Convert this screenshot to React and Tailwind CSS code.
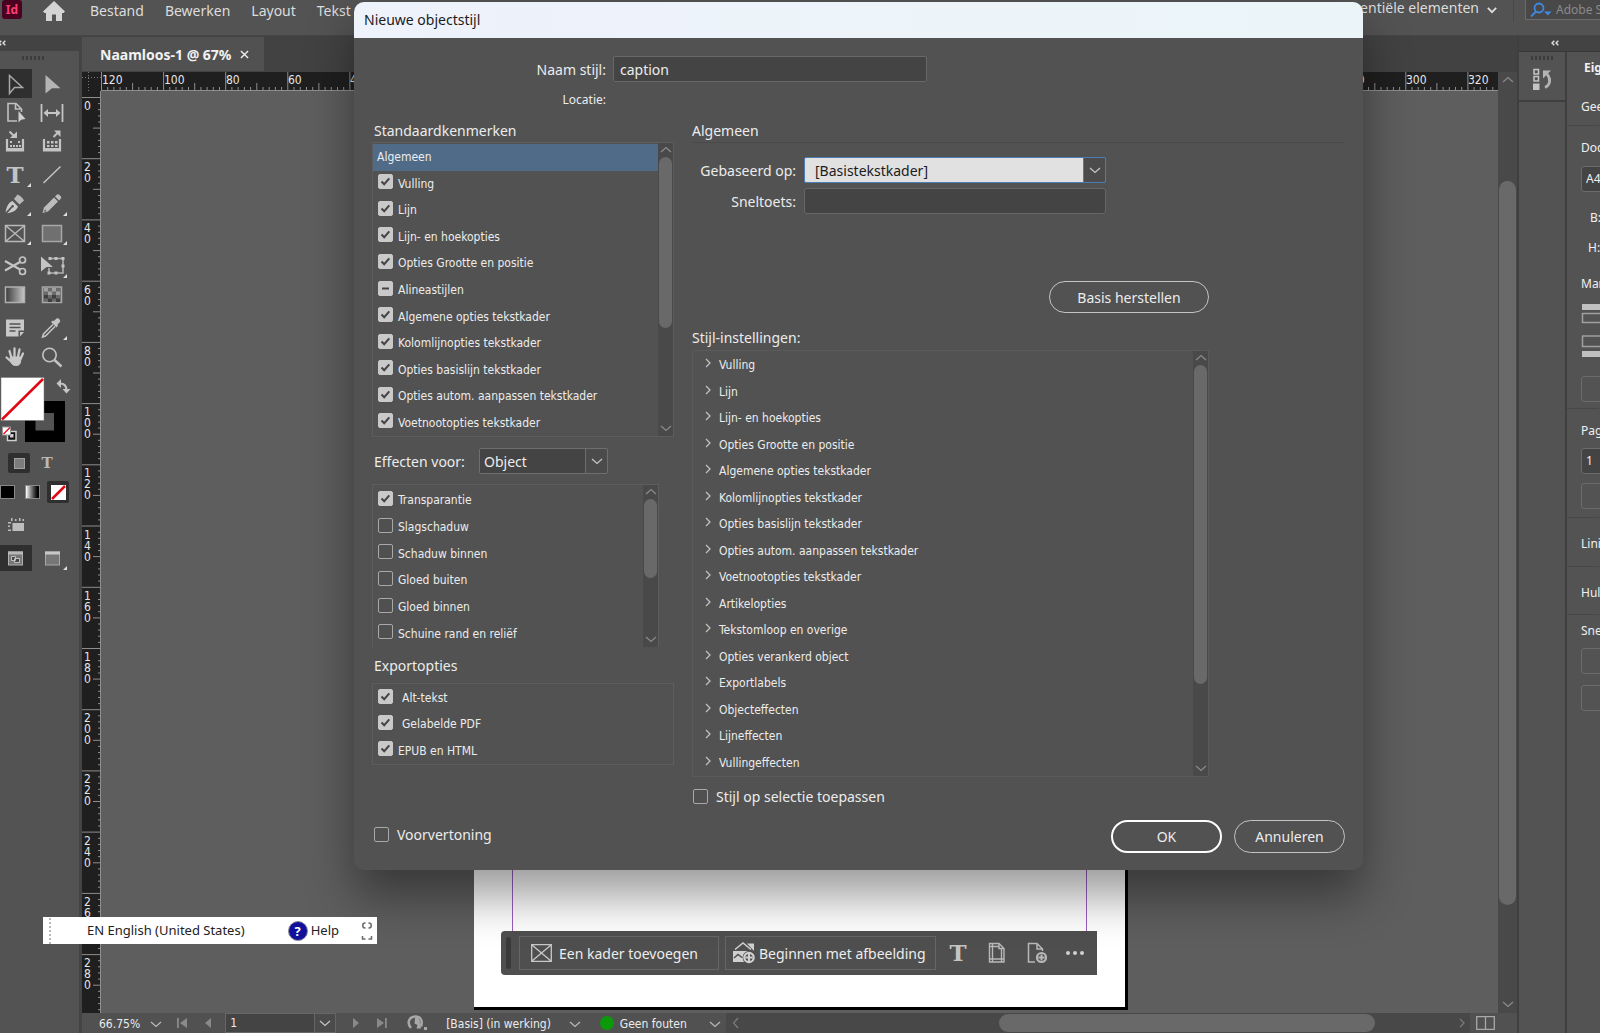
import React, { useState } from 'react';

const standardAttributes = [
  { label: 'Algemeen', state: 'none' },
  { label: 'Vulling', state: 'on' },
  { label: 'Lijn', state: 'on' },
  { label: 'Lijn- en hoekopties', state: 'on' },
  { label: 'Opties Grootte en positie', state: 'on' },
  { label: 'Alineastijlen', state: 'mixed' },
  { label: 'Algemene opties tekstkader', state: 'on' },
  { label: 'Kolomlijnopties tekstkader', state: 'on' },
  { label: 'Opties basislijn tekstkader', state: 'on' },
  { label: 'Opties autom. aanpassen tekstkader', state: 'on' },
  { label: 'Voetnootopties tekstkader', state: 'on' },
];

const effects = [
  { label: 'Transparantie', state: 'on' },
  { label: 'Slagschaduw', state: 'off' },
  { label: 'Schaduw binnen', state: 'off' },
  { label: 'Gloed buiten', state: 'off' },
  { label: 'Gloed binnen', state: 'off' },
  { label: 'Schuine rand en reliëf', state: 'off' },
];

const exportOptions = [
  { label: 'Alt-tekst', state: 'on', indent: true },
  { label: 'Gelabelde PDF', state: 'on', indent: true },
  { label: 'EPUB en HTML', state: 'on' },
];

const styleSettings = [
  'Vulling',
  'Lijn',
  'Lijn- en hoekopties',
  'Opties Grootte en positie',
  'Algemene opties tekstkader',
  'Kolomlijnopties tekstkader',
  'Opties basislijn tekstkader',
  'Opties autom. aanpassen tekstkader',
  'Voetnootopties tekstkader',
  'Artikelopties',
  'Tekstomloop en overige',
  'Opties verankerd object',
  'Exportlabels',
  'Objecteffecten',
  'Lijneffecten',
  'Vullingeffecten',
];

const chevronPaths = {
  up: 'M1 8 6 3.5 11 8',
  down: 'M1 4 6 8.5 11 4',
  left: 'M8 1 3.5 6 8 11',
  right: 'M4 2 8 6 4 10',
};

const Chevron = ({ dir = 'down', className = '' }) => (
  <svg viewBox="0 0 12 12" className={`w-3 h-3 shrink-0 ${className}`} fill="none" stroke="currentColor" strokeWidth="1.3">
    <path d={chevronPaths[dir]} />
  </svg>
);

const CollapseIcon = ({ className = '' }) => (
  <svg viewBox="0 0 8 6" className={`w-2 h-[6px] ${className}`} fill="none" stroke="#e0e0e0" strokeWidth="1.4">
    <path d="M3.3.7 1 3l2.3 2.300M7.300.700 5 3l2.300 2.300" />
  </svg>
);

const Checkbox = ({ id, state, className = '' }) => {
  const [value, setValue] = useState(state);
  const filled = value !== 'off';
  return (
    <span className={`relative block w-[15px] h-[15px] shrink-0 ${className}`}>
      <input
        id={id}
        type="checkbox"
        checked={filled}
        onChange={() => setValue(filled ? 'off' : 'on')}
        className={`block appearance-none w-[15px] h-[15px] rounded-[2px] border ${filled ? 'bg-[#c9c9c9] border-[#c9c9c9]' : 'bg-[#505050] border-[#a8a8a8]'}`}
      />
      {filled && (
        <svg viewBox="0 0 15 15" className="absolute inset-0 w-[15px] h-[15px] pointer-events-none" fill="none" stroke="#444444" strokeWidth="2">
          <path d={value === 'mixed' ? 'M4 7.5h7' : 'M3.5 7.5 6.2 10.2 11.3 4.3'} />
        </svg>
      )}
    </span>
  );
};

const CheckRow = ({ prefix, item }) => {
  const id = `${prefix}-${item.label}`;
  if (item.state === 'none') {
    return <div className="flex-1 flex items-center pl-1 bg-[#4f6b88]">{item.label}</div>;
  }
  return (
    <div className="flex-1 flex items-center pl-[5px]">
      <Checkbox id={id} state={item.state} className="mb-1" />
      <label htmlFor={id} className={item.indent ? 'pl-[9px]' : 'pl-[5px]'}>{item.label}</label>
    </div>
  );
};

const ListScrollbar = ({ thumb }) => (
  <div className="w-[15px] shrink-0 bg-[#494949] text-[#8a8a8a] flex flex-col items-center">
    <div className="h-[14px] flex items-center"><Chevron dir="up" /></div>
    <div className={`w-[13px] rounded-full bg-[#696969] ${thumb}`} />
    <div className="flex-1" />
    <div className="h-4 flex items-center"><Chevron /></div>
  </div>
);

/* ---------- toolbox ---------- */

const TextGlyph = ({ x = 15, y = 22, size = 23 }) => (
  <text x={x} y={y} fontSize={size} textAnchor="middle" fontWeight="700" fontFamily="DejaVu Serif, serif" fill="#c4c4c4">T</text>
);

const tools = {
  select: <path d="M9.5 5.5 22.5 17.5H14.5L9.5 23.5Z" fill="none" stroke="#a8a8a8" strokeWidth="1.5" />,
  direct: <path d="M9.5 5 24.5 18.2H16L9.5 23.5Z" fill="#b4b4b4" />,
  page: (
    <>
      <path d="M17 22H8V4.5h8l5.5 5.5v3M15.5 4.5V10h6" fill="none" stroke="#c0c0c0" strokeWidth="1.6" />
      <path d="M18.5 12v11.5l2.6-2.8 4.4-.6Z" fill="#d0d0d0" />
    </>
  ),
  gap: (
    <>
      <path d="M5.5 5v18M26.5 5v18M9 14h14" stroke="#c4c4c4" strokeWidth="1.8" />
      <path d="M12 10 7.5 14l4.5 4ZM20 10l4.5 4-4.5 4Z" fill="#c4c4c4" />
    </>
  ),
  collect: (
    <>
      <path d="M7 11v11.5h16V11" fill="none" stroke="#c4c4c4" strokeWidth="2.2" />
      <path d="M8 20h14v2H8ZM10 13h2v2h-2ZM18 13h2v2h-2ZM10 17h2v2h-2ZM13 17h2v2h-2ZM16 17h2v2h-2ZM19 17h2v2h-2Z" fill="#c4c4c4" />
      <path d="m9.500 3.500 4.500 4.500" stroke="#c4c4c4" strokeWidth="2" />
      <path d="M17 3.500V10H10Z" fill="#c4c4c4" />
    </>
  ),
  place: (
    <>
      <path d="M8 11v11.5h16V11" fill="none" stroke="#c4c4c4" strokeWidth="2.2" />
      <path d="M9 20h14v2H9ZM11 13h2.500v2.500H11ZM15 13h2.500v2.500H15ZM19 13h2.500v2.500H19ZM11 17h2.500v2H11ZM15 17h2.500v2H15ZM19 17h2.500v2H19Z" fill="#c4c4c4" />
      <path d="m17.500 9 4-4" stroke="#c4c4c4" strokeWidth="2" />
      <path d="M18 2.500h6.500V9Z" fill="#c4c4c4" />
    </>
  ),
  type: <TextGlyph />,
  line: <path d="M7.5 22 24.5 5.500" stroke="#c4c4c4" strokeWidth="1.5" />,
  pen: (
    <>
      <path d="M5.500 22.500c1-5.500 2.500-9.500 7-11.500l5.500 5.500c-1.500 4.500-6 6-11 7l5.500-6a1.300 1.300 0 1 0-1.200-1.200Z" fill="#cacaca" />
      <path d="m14 9 3.500-4.500c2.500 1 5.500 3.500 6.500 6l-4.500 4Z" fill="#b8b8b8" />
    </>
  ),
  pencil: (
    <>
      <path d="M6.500 23 8 17.500 18 7.500l4 4L12 21.500Z" fill="#bdbdbd" />
      <path d="m19 6.500 1.500-1.500c1-1 2-1 3 0l1 1c1 1 1 2 0 3L23 10.500Z" fill="#bdbdbd" />
      <path d="m9 19.500 1.500 1.500-2.500 1Z" fill="#535353" />
    </>
  ),
  frame: <path d="M5.5 6.5h19v16h-19ZM5.5 6.5l19 16M24.5 6.5l-19 16" fill="none" stroke="#b8b8b8" strokeWidth="1.5" />,
  rect: <rect x="6.5" y="6.5" width="19" height="16" fill="#707070" stroke="#a6a6a6" strokeWidth="1.5" />,
  scissors: (
    <g fill="none" stroke="#c4c4c4">
      <circle cx="22.500" cy="8" r="3" strokeWidth="1.7" />
      <circle cx="22.500" cy="19.500" r="3" strokeWidth="1.7" />
      <path d="M20 10 5 18.500M20 17.500 5 9" strokeWidth="2.2" />
    </g>
  ),
  transform: (
    <>
      <path d="M14 6.500h13v14.500H13V16" fill="none" stroke="#b0b0b0" strokeWidth="1.6" />
      <path d="M5 4.500 17 15h-6.500L5 19.500Z" fill="#c4c4c4" />
      <path d="M25.500 5h3v3h-3ZM25.500 12.500h3v3h-3ZM18.500 19.500h3v3h-3ZM11.500 19.500h3v3h-3ZM18.500 5h3v3h-3ZM12.500 5h3v3h-3Z" fill="#c4c4c4" />
    </>
  ),
  gradient: <rect x="5.5" y="6" width="19" height="15.5" fill="url(#toolGradient)" stroke="#b0b0b0" strokeWidth="1.5" />,
  feather: (
    <>
      <rect x="6.5" y="6" width="19" height="15.5" fill="#6a6a6a" stroke="#a6a6a6" strokeWidth="1.5" />
      <path d="M8 7h4v3.500H8ZM16 7h4v3.500h-4ZM12 10.500h4v3.500h-4ZM20 10.500h4v3.500h-4Z" fill="#a0a0a0" />
      <path d="M8 14h4v3.500H8ZM16 14h4v3.500h-4ZM12 17.500h4V21h-4ZM20 17.500h4V21h-4Z" fill="#404040" />
    </>
  ),
  note: (
    <>
      <path d="M6 5.500h18v11h-5.500v6H6ZM20 18h4L20 22.500Z" fill="#c8c8c8" />
      <path d="M9.500 10h11M9.500 13.500h11M9.500 17h6" stroke="#535353" strokeWidth="1.3" />
    </>
  ),
  eyedropper: (
    <>
      <path d="M17 10.500 7.500 20l-1 3 3-1L19 12.500" fill="none" stroke="#c4c4c4" strokeWidth="1.5" />
      <path d="m15 8 2-1.500 1 .5 2.500-2.500c1.500-1 4.500 1.500 3.500 3.500L21.500 10.500l.5 1L20.500 13.500Z" fill="#c4c4c4" />
    </>
  ),
  hand: (
    <g stroke="#c8c8c8" strokeLinecap="round" fill="#c8c8c8">
      <path d="M11.500 15 9.500 8M14.500 14V5.500M18 14 19.500 6.500M20.500 16 23 10.500M10.500 18 6.500 14.500" strokeWidth="2.3" />
      <path d="M10.500 14H21l-.5 5.500c-1 2.500-2 3-5 3s-4-2-5-4Z" strokeWidth="1" />
    </g>
  ),
  zoom: (
    <g fill="none" stroke="#c4c4c4">
      <circle cx="13.500" cy="12" r="6.700" strokeWidth="1.6" />
      <path d="m18.500 17 7 6.500" strokeWidth="2.4" />
    </g>
  ),
};

const toolGroups = [
  [['select', 'direct'], ['page', 'gap'], ['collect', 'place']],
  [['type', 'line'], ['pen', 'pencil'], ['frame', 'rect']],
  [['scissors', 'transform'], ['gradient', 'feather']],
  [['note', 'eyedropper'], ['hand', 'zoom']],
];

const withFlyout = ['type', 'pen', 'pencil', 'frame', 'rect', 'transform', 'eyedropper'];

const Tool = ({ name, active }) => (
  <button aria-label={name} className={`w-8 h-[29px] shrink-0 ${active ? 'bg-[#2f2f2f]' : ''}`}>
    <svg viewBox="0 0 32 28" className="w-8 h-7">
      {tools[name]}
      {withFlyout.includes(name) && <path d="M31 22v4h-4Z" fill="#e0e0e0" />}
    </svg>
  </button>
);

const Toolbox = () => (
  <aside className="w-[82px] shrink-0 border-r-[3px] border-[#444444] bg-[#535353]">
    <div className="h-[15px] bg-[#434343] pt-1"><CollapseIcon className="-ml-[2px]" /></div>
    <div className="h-[18px] flex gap-[2px] pl-[22px] pt-[5px]">
      {[0, 1, 2, 3, 4, 5].map((i) => <span key={i} className="w-[2px] h-1 bg-[#3c3c3c]" />)}
    </div>
    <div className="flex flex-col gap-1">
      {toolGroups.map((group, g) => (
        <div key={g}>
          {group.map(([left, right]) => (
            <div key={left} className="flex gap-1">
              <Tool name={left} active={left === 'select'} />
              <Tool name={right} />
            </div>
          ))}
        </div>
      ))}
    </div>

    {/* fill and stroke swatches */}
    <svg viewBox="0 0 76 70" className="w-[76px] h-[70px] mt-[6px]">
      <path d="M25 24h40v41H25ZM35.500 36v17.500H54V36Z" fill="#000" fillRule="evenodd" />
      <rect x="1" y="0.5" width="43" height="43" fill="#fff" stroke="#777" strokeWidth="0.5" />
      <path d="M2 42.500 43 2" stroke="#e30613" strokeWidth="2.5" />
      <path d="M60 6.500c5 0 6.500 3 6.500 7" fill="none" stroke="#c4c4c4" strokeWidth="2.2" />
      <path d="M61 2v9l-4.500-4.500ZM62.500 12h8l-4 4.500Z" fill="#c4c4c4" />
      <path d="M9 54.500h7v9H7.500V58" fill="#111" stroke="#d0d0d0" strokeWidth="1.5" />
      <path d="M10 57h3.500v3.500H10Z" fill="#d0d0d0" />
      <rect x="2.500" y="50" width="8" height="8" fill="#fff" stroke="#999" />
      <path d="m3.500 57 6.500-6.500" stroke="#e30613" strokeWidth="1.3" />
    </svg>

    <div className="flex items-center gap-[6px] pl-2 mt-[6px]">
      <button aria-label="Container" className="w-[22px] h-5 rounded-[2px] bg-[#2f2f2f] flex items-center justify-center">
        <span className="w-[11px] h-[11px] bg-[#7c7c7c] border border-[#a0a0a0]" />
      </button>
      <button className="w-[22px] h-5 text-[15px] leading-5 font-bold text-[#b8b8b8] font-['DejaVu_Serif',serif]">T</button>
    </div>
    <div className="flex items-center gap-[7px] mt-2">
      <button aria-label="Kleur" className="w-[15px] h-[14px] bg-black border border-[#888]" />
      <button aria-label="Verloop" className="w-[15px] h-[14px] ml-[3px] bg-gradient-to-r from-white to-black border border-[#888]" />
      <button aria-label="Geen" className="w-[22px] h-[22px] rounded-[2px] bg-[#2f2f2f] flex items-center justify-center">
        <svg viewBox="0 0 15 15" className="w-[15px] h-[15px]">
          <rect width="15" height="15" fill="#fff" />
          <path d="M1 14 14 1" stroke="#e30613" strokeWidth="2.5" />
        </svg>
      </button>
    </div>
    <svg viewBox="0 0 32 20" className="w-8 h-5 mt-[13px]" fill="#bdbdbd">
      <path d="M12.500 7H24v8H12.500ZM8 6h3v1.500H8ZM8 9.500h2v1.500H8ZM8 13.500h3V15H8ZM11 2h1.500v3H11ZM15 3h1.500v2H15ZM19 2h1.500v3H19ZM22.500 3H24v2h-1.500Z" />
    </svg>
    <div className="flex gap-1 mt-[9px]">
      <button aria-label="Normaal" className="w-8 h-[26px] bg-[#2f2f2f]">
        <svg viewBox="0 0 32 26" className="w-8 h-[26px]">
          <rect x="8.500" y="7" width="14" height="13" fill="#777" stroke="#b0b0b0" />
          <path d="M8 6.500h15v3H8Z" fill="#b8b8b8" />
          <path d="M11.500 11.500h4v4h-4ZM14.500 13.500h5v4h-5Z" fill="#444" stroke="#c0c0c0" />
        </svg>
      </button>
      <button aria-label="Schermmodus" className="w-8 h-[26px]">
        <svg viewBox="0 0 32 26" className="w-8 h-[26px]">
          <rect x="9.500" y="7" width="14" height="13" fill="#777" stroke="#a8a8a8" />
          <path d="M9 6.500h15v3H9Z" fill="#c8c8c8" />
          <path d="M31 21v4h-4Z" fill="#e0e0e0" />
        </svg>
      </button>
    </div>
  </aside>
);

/* ---------- rulers ---------- */

const H_STEP = 62.11;
const V_STEP = 61.22;

const HorizontalRuler = () => {
  let d = '';
  for (let i = 0; i < 23 * 10; i++) {
    const x = (i * H_STEP) / 10 + 19.5;
    const top = i % 10 === 0 ? 0 : i % 5 === 0 ? 11 : 15;
    d += `M${x.toFixed(1)} ${top}V19`;
  }
  return (
    <svg className="block w-full h-[19px] bg-[#1f1f1f]">
      <path d={d} stroke="#8e8e8e" strokeWidth="1" />
      <path d="M0 5.500h19M6.500 0v19" stroke="#777" strokeDasharray="1 2" />
      <path d="M19 18.500H1420" stroke="#8e8e8e" />
      {Array.from({ length: 23 }, (_, i) => (
        <text key={i} x={Math.round(i * H_STEP) + 20} y="12" fontSize="12" fill="#e6e6e6">{Math.abs(i * 20 - 120)}</text>
      ))}
    </svg>
  );
};

const VerticalRuler = () => {
  let d = '';
  for (let i = 0; i < 15 * 10; i++) {
    const y = (i * V_STEP) / 10 + 6.5;
    const left = i % 10 === 0 ? 0 : i % 5 === 0 ? 11 : 16;
    d += `M${left} ${y.toFixed(1)}H19`;
  }
  return (
    <svg className="block w-[19px] h-full shrink-0 bg-[#1f1f1f]">
      <path d={d} stroke="#8e8e8e" strokeWidth="1" />
      <path d="M18.500 0V1000" stroke="#8e8e8e" />
      {Array.from({ length: 15 }, (_, i) =>
        String(i * 20).split('').map((digit, n) => (
          <text key={`${i}-${n}`} x="2" y={Math.round(i * V_STEP) + 19 + n * 11} fontSize="12" fill="#e6e6e6">{digit}</text>
        ))
      )}
    </svg>
  );
};

/* ---------- document window ---------- */

const ContextBar = () => (
  <div className="absolute left-[400px] top-[840px] w-[596px] h-11 rounded-l-[4px] bg-[#4f4f4f] flex items-center pl-[5px] text-[14px] text-[#ededed] font-['Noto_Sans',sans-serif]">
    <div className="w-[5px] h-8 rounded-[3px] bg-[#3a3a3a]" />
    <button className="ml-2 w-[200px] h-[34px] border border-[#666666] flex items-center pl-[11px] gap-[7px] whitespace-nowrap">
      <svg viewBox="0 0 21 18" className="w-[21px] h-[18px] shrink-0" fill="none" stroke="#c8c8c8" strokeWidth="1.3">
        <path d="M.7.700h19.600v16.600H.7ZM.7.700l19.600 16.600M20.300.700.7 17.300" />
      </svg>
      Een kader toevoegen
    </button>
    <button className="ml-[6px] w-[211px] h-[34px] border border-[#666666] flex items-center pl-[6px] gap-[3px] whitespace-nowrap">
      <svg viewBox="0 0 24 22" className="w-6 h-[22px] shrink-0">
        <path d="M3 7.500 11 1l8 6.500" fill="none" stroke="#d0d0d0" strokeWidth="1.5" />
        <path d="M15 1.500h7V9ZM1 9h15v2c-4 1-5 5-4 9H1Z" fill="#d0d0d0" />
        <path d="m2 16 4-3.500 4 3" fill="none" stroke="#4f4f4f" strokeWidth="1.5" />
        <circle cx="17" cy="15.500" r="6.500" fill="#4f4f4f" />
        <circle cx="17" cy="15.500" r="4.700" fill="none" stroke="#d0d0d0" strokeWidth="2.2" />
        <path d="M17 12v7M13.500 15.500h7" stroke="#d0d0d0" strokeWidth="2" />
      </svg>
      Beginnen met afbeelding
    </button>
    <button aria-label="Tekst" className="ml-3">
      <svg viewBox="0 0 20 22" className="w-5 h-[22px]"><TextGlyph x={10} y={19} size={23} /></svg>
    </button>
    <button aria-label="Pagina" className="ml-5">
      <svg viewBox="0 0 18 22" className="w-[18px] h-[22px]" fill="none" stroke="#b8b8b8" strokeWidth="1.4">
        <path d="M1.500 1.500h9.500l5 5v13.500H1.500ZM4.500 1.500v18.500M13.500 6v14M1.500 4.500h9M1.500 17h14.500M11 1.500v5h5" />
      </svg>
    </button>
    <button aria-label="Pagina toevoegen" className="ml-5">
      <svg viewBox="0 0 22 22" className="w-[22px] h-[22px]" fill="none" stroke="#b8b8b8" strokeWidth="1.5">
        <path d="M9 20H2.500V1.500H11L16.500 7v2M11 1.500V7h5.500" />
        <circle cx="15.500" cy="15.500" r="4.500" strokeWidth="2.2" />
        <path d="M15.500 12.500v6M12.500 15.500h6" strokeWidth="2" />
      </svg>
    </button>
    <button aria-label="Meer" className="ml-[18px] flex gap-[3px]">
      {[0, 1, 2].map((i) => <span key={i} className="w-1 h-1 rounded-full bg-[#cfcfcf]" />)}
    </button>
  </div>
);

const StatusBar = () => (
  <footer className="h-5 shrink-0 flex items-center bg-[#515151] text-[12px] leading-5 text-[#ececec]">
    <button className="flex items-center gap-[10px] pl-[17px] pt-px">66.75%<Chevron className="text-[#b8b8b8]" /></button>
    <svg viewBox="0 0 40 12" className="w-10 h-3 ml-[14px]" fill="#8a8a8a">
      <path d="M1 1h1.800v10H1ZM11 1v10L4 6ZM35 1v10l-6-5Z" />
    </svg>
    <div className="relative ml-[9px] w-[111px] h-5">
      <select aria-label="Pagina" className="block appearance-none w-[111px] h-5 pl-1 bg-[#444444] border border-[#666666] leading-4">
        <option>1</option>
      </select>
      <span className="absolute right-0 top-0 w-[22px] h-5 border border-[#666666] bg-[#4b4b4b] flex items-center justify-center pointer-events-none"><Chevron className="text-[#c4c4c4]" /></span>
    </div>
    <svg viewBox="0 0 40 12" className="w-10 h-3 ml-[14px]" fill="#8a8a8a">
      <path d="M3 1v10l6-5ZM27 1v10l7-5ZM35 1h1.800v10H35Z" />
    </svg>
    <svg viewBox="0 0 24 18" className="w-6 h-[18px] ml-[16px]">
      <path d="M5 14C0 8 4 2.500 9.500 2.500c5 0 7.500 4 5.500 10" fill="none" stroke="#a8a8a8" strokeWidth="2.5" />
      <path d="M9 4c3-1 5 1 5 4.500l1 6h-4.500l1-3.500-3-1.500Z" fill="#a8a8a8" />
      <path d="M18 13h3v3h-3Z" fill="#a8a8a8" />
    </svg>
    <button className="flex items-center gap-[18px] ml-4 pt-px whitespace-nowrap">[Basis] (in werking)<Chevron className="text-[#b8b8b8]" /></button>
    <span className="ml-[19px] w-[14px] h-[14px] rounded-full bg-[#0a9a0a]" />
    <button className="flex items-center gap-[22px] ml-[6px] pt-px whitespace-nowrap">Geen fouten<Chevron className="text-[#b8b8b8]" /></button>
    <div className="flex-1 h-5 ml-[5px] bg-[#484848] text-[#7a7a7a] flex items-center pl-1 pr-[2px]">
      <Chevron dir="left" />
      <div className="w-[376px] h-[18px] rounded-full bg-[#696969] ml-auto mr-[81px]" />
      <Chevron dir="right" />
    </div>
    <div className="w-[47px] flex items-center pl-[6px]">
      <svg viewBox="0 0 19 14" className="w-[19px] h-[14px]" fill="none" stroke="#a8a8a8" strokeWidth="1.3">
        <path d="M.7.700h17.600v12.600H.7ZM9.500.700v12.600" />
      </svg>
    </div>
  </footer>
);

const DocumentWindow = () => (
  <section className="flex-1 min-w-0 flex flex-col">
    <div className="h-9 shrink-0 bg-[#424242] pt-px">
      <div className="w-[182px] h-[34px] bg-[#515151] flex items-center pl-[18px] gap-2 text-[14px] font-bold text-[#f2f2f2] whitespace-nowrap font-['Noto_Sans',sans-serif]">
        Naamloos-1 @ 67%
        <button aria-label="Sluiten">
          <svg viewBox="0 0 10 10" className="w-[9px] h-[9px]" stroke="#f0f0f0" strokeWidth="1.5"><path d="m1 1 8 8M9 1 1 9" /></svg>
        </button>
      </div>
    </div>
    <div className="flex-1 min-h-0 flex">
      <div className="flex-1 min-w-0 flex flex-col">
        <HorizontalRuler />
        <div className="flex-1 min-h-0 flex">
          <VerticalRuler />
          <div className="relative flex-1 min-w-0 overflow-hidden bg-[#5e5e5e]">
            <div className="absolute left-[373px] top-[6px] w-[654px] h-[913px] bg-white border-r-[3px] border-b-[3px] border-black px-[38px] pt-[38px]">
              <div className="h-[834px] border-x border-[#9a5fc0]" />
            </div>
            <ContextBar />
          </div>
        </div>
      </div>
      <div className="w-[19px] shrink-0 bg-[#494949] text-[#8a8a8a] flex flex-col items-center">
        <div className="h-4 flex items-center"><Chevron dir="up" /></div>
        <div className="w-[17px] h-[724px] mt-[93px] rounded-full bg-[#696969]" />
        <div className="flex-1" />
        <div className="h-[18px] flex items-center"><Chevron /></div>
      </div>
    </div>
    <StatusBar />
  </section>
);

/* ---------- right side ---------- */

const PanelButton = ({ label, className }) => (
  <button aria-label={label} className={`block w-40 h-[26px] rounded-[3px] border border-[#6b6b6b] ${className}`} />
);

const PanelSelect = ({ label, value, className }) => (
  <select aria-label={label} className={`block appearance-none w-40 h-[26px] rounded-[3px] border border-[#6b6b6b] bg-[#444444] pl-1 text-[12px] ${className}`}>
    <option>{value}</option>
  </select>
);

const RightDock = () => (
  <aside className="w-[83px] shrink-0 border-l-2 border-[#3f3f3f] flex flex-col overflow-hidden">
    <div className="h-4 shrink-0 bg-[#434343] border-b border-[#383838] pl-8 pt-1"><CollapseIcon /></div>
    <div className="flex-1 flex">
      <div className="w-12 shrink-0 border-r-2 border-[#3f3f3f]">
        <div className="h-[50px] border-b-2 border-[#3f3f3f]">
          <div className="flex gap-[2px] pl-[12px] pt-1">
            {[0, 1, 2, 3, 4, 5].map((i) => <span key={i} className="w-[2px] h-1 bg-[#3c3c3c]" />)}
          </div>
          <svg viewBox="0 0 22 24" className="w-[22px] h-6 ml-[13px] mt-[8px]">
            <path d="M2 1.500h4.500V6H2ZM2 8.500h4.500V13H2Z" fill="none" stroke="#c4c4c4" strokeWidth="1.5" />
            <path d="M1 15.500h6.500V22H1Z" fill="#c4c4c4" />
            <path d="M13 19.500C18.500 17 19 11 15 6" fill="none" stroke="#b4b4b4" strokeWidth="2.8" />
            <path d="M11 2.500h8l-8 8Z" fill="#b4b4b4" />
          </svg>
        </div>
      </div>
      <div className="w-8 shrink-0 text-[12px] leading-4 text-[#f0f0f0] whitespace-nowrap font-['Noto_Sans',sans-serif]">
        <div className="pl-[17px] pt-2 font-bold">Eig</div>
        <div className="pl-[14px] h-[50px] pt-[23px] border-b border-[#484848]">Gee</div>
        <div className="pl-[14px]">
          <div className="pt-[14px]">Doc</div>
          <PanelSelect label="Formaat" value="A4" className="mt-[10px]" />
          <div className="pl-[9px] pt-[18px]">B:</div>
          <div className="pl-[7px] pt-[14px]">H:</div>
          <div className="pt-5">Mar</div>
          <svg viewBox="0 0 40 54" className="w-10 h-[54px] mt-[11px]" fill="none" stroke="#a0a0a0" strokeWidth="1.5">
            <path d="M1 1h38v6H1ZM1 48h38v6H1Z" fill="#c0c0c0" stroke="none" />
            <path d="M1.500 10.500h38v9h-38ZM1.500 33h38v10.500h-38Z" />
          </svg>
        </div>
        <div className="pl-[14px] pb-[6px] border-b border-[#484848]"><PanelButton label="Marges aanpassen" className="mt-[19px]" /></div>
        <div className="pl-[14px] pt-[14px] pb-2 border-b border-[#484848]">
          Pag
          <PanelSelect label="Pagina" value="1" className="mt-[9px]" />
          <PanelButton label="Pagina's bewerken" className="mt-[9px]" />
        </div>
        <div className="pl-[14px] h-[49px] pt-[18px] border-b border-[#484848]">Lini</div>
        <div className="pl-[14px] h-12 pt-[18px] border-b border-[#484848]">Hul</div>
        <div className="pl-[14px] pt-2">
          Sne
          <PanelButton label="Bestand importeren" className="mt-[9px]" />
          <PanelButton label="Tekst invoegen" className="mt-[11px]" />
        </div>
      </div>
    </div>
  </aside>
);

/* ---------- menu bar ---------- */

const MenuBar = () => (
  <header className="h-9 shrink-0 flex items-start justify-between border-b border-[#464646] text-[14px] leading-[21px] text-[#dcdcdc] whitespace-nowrap font-['Noto_Sans',sans-serif]">
    <nav className="flex items-start">
      <div className="ml-[2px] w-5 h-[19px] rounded-[3px] bg-[#49021f] text-center text-[12px] leading-[19px] font-bold text-[#ff3d73]">Id</div>
      <a href="#home" aria-label="Start" className="ml-[21px] mt-px">
        <svg viewBox="0 0 22 20" className="w-[22px] h-5" fill="#d4d4d4"><path d="M11 0 22 10.500 20.500 12H19v8h-6v-6.500H9V20H3v-8H1.500L0 10.500Z" /></svg>
      </a>
      <div className="flex gap-[21px] ml-[25px]">
        <a href="#bestand">Bestand</a>
        <a href="#bewerken">Bewerken</a>
        <a href="#layout">Layout</a>
        <a href="#tekst">Tekst</a>
      </div>
    </nav>
    <div className="flex items-start">
      <button className="flex items-center gap-2 leading-4">
        Essentiële elementen
        <svg viewBox="0 0 12 12" className="w-[10px] h-3 mt-1" fill="none" stroke="#dcdcdc" strokeWidth="2.2"><path d="m1 3.500 5 5 5-5" /></svg>
      </button>
      <div className="ml-4 w-px h-[22px] bg-[#484848]" />
      <div className="flex items-center ml-[11px] w-[75px] h-5 border-l border-b border-[#6b6b6b] bg-[#484848] pl-1 gap-1 overflow-hidden">
        <svg viewBox="0 0 22 16" className="w-[22px] h-4 shrink-0" fill="none" stroke="#3f8ae0" strokeWidth="1.8">
          <circle cx="9" cy="6" r="4.500" />
          <path d="m6 9.500-5 5" />
          <path d="M14 9.500h7.500l-3.700 4Z" fill="#3f8ae0" stroke="none" />
        </svg>
        <input aria-label="Zoeken" placeholder="Adobe Stock" className="w-24 shrink-0 bg-transparent text-[12px] placeholder:text-[#8a8a8a]" />
      </div>
    </div>
  </header>
);

/* ---------- dialog ---------- */

const ObjectStyleDialog = () => (
  <div
    role="dialog"
    aria-label="Nieuwe objectstijl"
    className="absolute left-[354px] top-[2px] w-[1009px] rounded-[10px] overflow-hidden bg-[#525252] text-[14px] text-[#ececec] shadow-[0_26px_48px_rgba(0,0,0,0.4)] font-['Noto_Sans',sans-serif]"
  >
    <div className="h-9 flex items-center pl-[10px] pb-px bg-gradient-to-r from-[#eef2fb] to-[#ebf5f8] text-[#1b1b1b]">Nieuwe objectstijl</div>
    <div className="px-[18px] pt-[18px] pb-[17px]">
      <div className="flex items-center">
        <label htmlFor="style-name" className="w-[234px] text-right">Naam stijl:</label>
        <input id="style-name" defaultValue="caption" className="ml-[7px] w-[314px] h-[26px] rounded-[2px] border border-[#686868] bg-[#444444] px-[6px]" />
      </div>
      <div className="mt-[9px] w-[234px] h-[18px] text-right text-[12px] leading-[18px]">Locatie:</div>

      <div className="flex mt-[11px] gap-[18px]">
        <div className="w-[302px] shrink-0">
          <h2 className="h-[22px] leading-[22px] pl-[2px]">Standaardkenmerken</h2>
          <div className="h-[295px] flex border border-[#5d5d5d] text-[12px] leading-4 font-['DejaVu_Sans_Condensed',sans-serif]">
            <div className="flex-1 flex flex-col pt-px">
              {standardAttributes.map((item) => <CheckRow key={item.label} prefix="attr" item={item} />)}
            </div>
            <ListScrollbar thumb="h-[171px]" />
          </div>

          <div className="mt-[11px] flex items-center pl-[2px]">
            <label htmlFor="effects-for" className="w-[105px]">Effecten voor:</label>
            <div className="relative w-[129px]">
              <select id="effects-for" className="block appearance-none w-full h-[26px] pl-1 rounded-[2px] border border-[#6e6e6e] bg-[#444444]">
                <option>Object</option>
              </select>
              <span className="absolute right-0 top-0 w-[23px] h-[26px] border border-[#6e6e6e] rounded-r-[2px] bg-[#4b4b4b] flex items-center justify-center pointer-events-none"><Chevron className="text-[#c4c4c4]" /></span>
            </div>
          </div>

          <div className="mt-[10px] w-[287px] h-[163px] flex border border-b-0 border-[#5d5d5d] text-[12px] leading-4 font-['DejaVu_Sans_Condensed',sans-serif]">
            <div className="flex-1 flex flex-col pt-[2px]">
              {effects.map((item) => <CheckRow key={item.label} prefix="effect" item={item} />)}
            </div>
            <ListScrollbar thumb="h-[79px]" />
          </div>

          <h2 className="mt-2 h-[22px] leading-[22px] pl-[2px]">Exportopties</h2>
          <div className="mt-[6px] h-[82px] flex flex-col pt-px border border-[#5d5d5d] text-[12px] leading-4 font-['DejaVu_Sans_Condensed',sans-serif]">
            {exportOptions.map((item) => <CheckRow key={item.label} prefix="export" item={item} />)}
          </div>
        </div>

        <div className="flex-1">
          <h2 className="h-[23px] leading-[22px] border-b border-[#4a4a4a]">Algemeen</h2>
          <div className="mt-[14px] flex items-center gap-2">
            <label htmlFor="based-on" className="w-[104px] text-right">Gebaseerd op:</label>
            <div className="relative w-[302px]">
              <select id="based-on" className="block appearance-none w-full h-[26px] pl-[10px] rounded-[2px] border border-[#4a7db3] bg-[#e1e1e1] text-[#1c1c1c]">
                <option>[Basistekstkader]</option>
              </select>
              <span className="absolute right-0 top-0 w-[23px] h-[26px] border border-[#4a7db3] rounded-r-[2px] bg-[#4b4b4b] flex items-center justify-center pointer-events-none"><Chevron className="text-[#c4c4c4]" /></span>
            </div>
          </div>
          <div className="mt-[5px] flex items-center gap-2">
            <label htmlFor="shortcut" className="w-[104px] text-right">Sneltoets:</label>
            <input id="shortcut" className="w-[302px] h-[26px] rounded-[3px] border border-[#666666] bg-[#444444] px-[6px]" />
          </div>
          <div className="w-[517px]">
            <div className="mt-[67px] flex justify-end">
              <button className="w-[160px] h-8 rounded-full border border-[#c4c4c4]">Basis herstellen</button>
            </div>
            <h2 className="mt-[14px] h-[22px] leading-[22px]">Stijl-instellingen:</h2>
            <div className="mt-px h-[427px] flex border border-[#5a5a5a] text-[12px] leading-4 font-['DejaVu_Sans_Condensed',sans-serif]">
              <ul className="flex-1 flex flex-col pt-px">
                {styleSettings.map((label) => (
                  <li key={label} className="flex-1 flex items-center pl-[9px] gap-[5px]">
                    <Chevron dir="right" className="mb-1 text-[#c0c0c0]" />
                    {label}
                  </li>
                ))}
              </ul>
              <ListScrollbar thumb="h-[319px]" />
            </div>
            <div className="mt-[9px] h-5 flex items-center gap-2 pl-px">
              <Checkbox id="apply-selection" state="off" />
              <label htmlFor="apply-selection">Stijl op selectie toepassen</label>
            </div>
          </div>
        </div>
      </div>

      <div className="mt-[14px] flex items-center justify-between">
        <div className="flex items-center gap-2 pl-[2px] pb-1">
          <Checkbox id="preview" state="off" />
          <label htmlFor="preview">Voorvertoning</label>
        </div>
        <div className="flex gap-3">
          <button className="w-[111px] h-[33px] rounded-full border-2 border-white">OK</button>
          <button className="w-[111px] h-[33px] rounded-full border border-[#c4c4c4]">Annuleren</button>
        </div>
      </div>
    </div>
  </div>
);

const LanguageBar = () => (
  <div className="absolute left-[43px] bottom-[89px] w-[334px] h-[27px] bg-white flex items-center text-[13px] text-[#222222] whitespace-nowrap font-['Noto_Sans',sans-serif]">
    <div className="ml-[6px] h-[26px] border-l-2 border-dotted border-[#b8b8b8]" />
    <button className="ml-9">EN English (United States)</button>
    <button className="ml-auto flex items-center gap-[3px]">
      <span className="w-5 h-5 rounded-full bg-[#10109a] border border-[#8a8a9a] text-white text-[13px] leading-[18px] font-bold text-center">?</span>
      Help
    </button>
    <svg viewBox="0 0 12 22" className="w-3 h-[22px] ml-[22px] mr-[4px]" fill="none" stroke="#6a6a6a" strokeWidth="1.5">
      <path d="M4.500 3H4C1 3 1 8 4 8h.5M7.500 3H8c3 0 3 5 0 5h-.5M1.500 16v3h3M10.500 16v3h-3" />
    </svg>
  </div>
);

const App = () => (
  <div className="relative h-screen w-full overflow-hidden bg-[#535353] flex flex-col font-['DejaVu_Sans_Condensed','Noto_Sans',sans-serif]">
    <svg width="0" height="0" className="absolute">
      <defs>
        <linearGradient id="toolGradient">
          <stop offset="0" stopColor="#3a3a3a" />
          <stop offset="1" stopColor="#c8c8c8" />
        </linearGradient>
      </defs>
    </svg>
    <MenuBar />
    <div className="flex-1 min-h-0 flex">
      <Toolbox />
      <DocumentWindow />
      <RightDock />
    </div>
    <ObjectStyleDialog />
    <LanguageBar />
  </div>
);

export default App;
